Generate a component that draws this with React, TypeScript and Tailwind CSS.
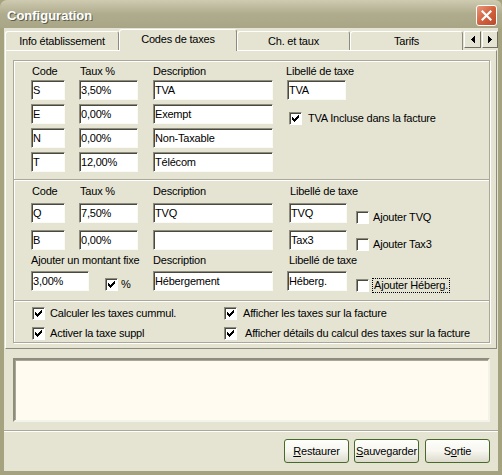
import React from "react";

const CheckMark = () => (
  <svg width="7" height="7" viewBox="0 0 7 7" shapeRendering="crispEdges">
    <path
      d="M0 2h1v3h-1zM1 3h1v3h-1zM2 4h1v3h-1zM3 3h1v3h-1zM4 2h1v3h-1zM5 1h1v3h-1zM6 0h1v3h-1z"
      fill="#000"
    />
  </svg>
);

const Box = ({ checked }: { checked?: boolean }) => (
  <div className="w-[13px] h-[13px] shrink-0 bg-white border border-t-[#8e8c7d] border-l-[#8e8c7d] border-r-white border-b-white shadow-[inset_1px_1px_0_#4a493f] flex items-center justify-center">
    {checked && <CheckMark />}
  </div>
);

const Field = ({ className, value = "" }: { className: string; value?: string }) => (
  <div
    className={`${className} h-[20px] shrink-0 bg-white border border-t-[#8e8c7d] border-l-[#8e8c7d] border-r-[#fbfbf6] border-b-[#fbfbf6] shadow-[inset_1px_1px_0_#4a493f] pl-[1px] flex items-center whitespace-nowrap overflow-hidden`}
  >
    {value}
  </div>
);

const Tab = ({ label, className, selected }: { label: string; className: string; selected?: boolean }) => (
  <div
    className={`${className} shrink-0 flex items-center justify-center rounded-t-[3px] border-l border-t border-white border-r border-r-[#8c8b7e] ${
      selected ? "h-[22px] -mb-[1px] relative z-10 bg-[#e5e4d3] pb-[3px]" : "h-[19px] bg-[#e5e4d3]"
    }`}
  >
    {label}
  </div>
);

const ArrowBtn = ({ dir, className }: { dir: "left" | "right"; className: string }) => (
  <div
    className={`${className} h-[17px] shrink-0 bg-[#e5e4d3] border border-t-white border-l-white border-r-[#716f64] border-b-[#716f64] flex items-center justify-center`}
  >
    <svg width="4" height="7" viewBox="0 0 4 7" shapeRendering="crispEdges">
      {dir === "left" ? <path d="M4 0v7L0 3.5z" fill="#000" /> : <path d="M0 0v7l4-3.5z" fill="#000" />}
    </svg>
  </div>
);

const Btn = ({ children }: { children: React.ReactNode }) => (
  <div className="w-[65px] h-[24px] shrink-0 rounded-[3px] border border-[#47692a] bg-gradient-to-b from-[#fefefb] via-[#f7f6ef] to-[#dddbcc] flex items-center justify-center">
    {children}
  </div>
);

const Sep = () => <div className="h-[2px] border-t border-t-[#aca899] border-b border-b-white" />;

export default function App() {
  return (
    <div className="w-[502px] h-[475px] flex flex-col font-['Liberation_Sans',Arial,sans-serif] text-[11px] leading-[13px] tracking-[-0.2px] text-black bg-[#a5a280]">
      {/* title bar */}
      <div className="h-[28px] shrink-0 rounded-t-[7px] bg-gradient-to-b from-[#cfcbb1] via-[#afab8d] to-[#a9a587] flex items-center justify-between pl-[7px] pr-[5px] pt-[3px]">
        <span className="text-white font-bold text-[13px] leading-[15px] tracking-normal [text-shadow:1px_1px_0_#5f5d49]">
          Configuration
        </span>
        <div className="w-[21px] h-[21px] rounded-[3px] border border-white bg-gradient-to-br from-[#e9967a] via-[#d2623f] to-[#b9492a] flex items-center justify-center">
          <svg width="11" height="11" viewBox="0 0 11 11">
            <path d="M1.5 1.5L9.5 9.5M9.5 1.5L1.5 9.5" stroke="#fff" strokeWidth="2.2" strokeLinecap="square" />
          </svg>
        </div>
      </div>

      {/* body */}
      <div className="flex-1 flex flex-col bg-[#e5e4d3] mx-[4px] mb-[4px]">
        {/* tabs */}
        <div className="h-[22px] shrink-0 flex items-end pl-[1px]">
          <Tab className="w-[114px]" label="Info établissement" />
          <Tab className="w-[118px]" label="Codes de taxes" selected />
          <Tab className="w-[113px]" label="Ch. et taux" />
          <Tab className="w-[113px]" label="Tarifs" />
          <div className="self-start mt-[3px] ml-[1px] flex gap-[1px]">
            <ArrowBtn dir="left" className="w-[17px]" />
            <ArrowBtn dir="right" className="w-[16px]" />
          </div>
        </div>

        {/* tab panel */}
        <div className="ml-[1px] w-[492px] h-[299px] shrink-0 border border-t-white border-l-white border-r-[#8c8b7e] border-b-[#8c8b7e] pt-[9px] pl-[7px]">
          <div className="w-[477px] border border-[#aca899] shadow-[inset_1px_1px_0_#fff,1px_1px_0_#fff]">
            {/* section 1 */}
            <div className="flex pl-[17px] pt-[4px] pb-[7px]">
              <div className="flex flex-col w-[34px]">
                <div className="h-[15px] pl-[1px]">Code</div>
                <div className="flex flex-col gap-[4px]">
                  <Field className="w-[34px]" value="S" />
                  <Field className="w-[34px]" value="E" />
                  <Field className="w-[34px]" value="N" />
                  <Field className="w-[34px]" value="T" />
                </div>
              </div>
              <div className="flex flex-col w-[59px] ml-[14px]">
                <div className="h-[15px] pl-[1px]">Taux %</div>
                <div className="flex flex-col gap-[4px]">
                  <Field className="w-[59px]" value="3,50%" />
                  <Field className="w-[59px]" value="0,00%" />
                  <Field className="w-[59px]" value="0,00%" />
                  <Field className="w-[59px]" value="12,00%" />
                </div>
              </div>
              <div className="flex flex-col w-[120px] ml-[15px]">
                <div className="h-[15px]">Description</div>
                <div className="flex flex-col gap-[4px]">
                  <Field className="w-[120px]" value="TVA" />
                  <Field className="w-[120px]" value="Exempt" />
                  <Field className="w-[120px]" value="Non-Taxable" />
                  <Field className="w-[120px]" value="Télécom" />
                </div>
              </div>
              <div className="flex flex-col ml-[13px]">
                <div className="h-[15px]">Libellé de taxe</div>
                <Field className="w-[59px] ml-[1px]" value="TVA" />
                <div className="flex items-center mt-[12px] ml-[3px]">
                  <Box checked />
                  <span className="ml-[6px]">TVA Incluse dans la facture</span>
                </div>
              </div>
            </div>

            <Sep />

            {/* section 2 */}
            <div className="flex flex-col pl-[17px] pt-[4px] pb-[7px]">
              <div className="flex h-[18px]">
                <div className="w-[34px] pl-[1px]">Code</div>
                <div className="w-[59px] ml-[14px] pl-[1px]">Taux %</div>
                <div className="w-[120px] ml-[15px]">Description</div>
                <div className="ml-[17px]">Libellé de taxe</div>
              </div>
              <div className="flex items-start">
                <Field className="w-[34px]" value="Q" />
                <Field className="w-[59px] ml-[14px]" value="7,50%" />
                <Field className="w-[120px] ml-[15px]" value="TVQ" />
                <Field className="w-[58px] ml-[16px]" value="TVQ" />
                <div className="flex items-center ml-[9px] mt-[8px]">
                  <Box />
                  <span className="ml-[4px]">Ajouter TVQ</span>
                </div>
              </div>
              <div className="flex items-start mt-[6px]">
                <Field className="w-[34px]" value="B" />
                <Field className="w-[59px] ml-[14px]" value="0,00%" />
                <Field className="w-[120px] ml-[15px]" />
                <Field className="w-[58px] ml-[16px]" value="Tax3" />
                <div className="flex items-center ml-[9px] mt-[8px]">
                  <Box />
                  <span className="ml-[4px]">Ajouter Tax3</span>
                </div>
              </div>
              <div className="flex h-[20px] pt-[3px]">
                <div className="w-[122px]">Ajouter un montant fixe</div>
                <div className="w-[120px]">Description</div>
                <div className="ml-[16px]">Libellé de taxe</div>
              </div>
              <div className="flex items-start">
                <div className="w-[122px] flex items-start">
                  <Field className="w-[58px]" value="3,00%" />
                  <div className="flex items-center ml-[16px] mt-[7px]">
                    <Box checked />
                    <span className="ml-[3px]">%</span>
                  </div>
                </div>
                <Field className="w-[120px]" value="Hébergement" />
                <Field className="w-[60px] ml-[14px]" value="Héberg." />
                <div className="flex items-center ml-[9px] mt-[7px]">
                  <Box />
                  <span className="ml-[3px] px-[1px] border border-dotted border-black leading-[13px]">
                    Ajouter Héberg.
                  </span>
                </div>
              </div>
            </div>

            <Sep />

            {/* section 3 */}
            <div className="flex flex-col pl-[18px] pt-[2px] gap-[2px]">
              <div className="flex items-center h-[18px]">
                <div className="w-[192px] flex items-center">
                  <Box checked />
                  <span className="ml-[5px]">Calculer les taxes cummul.</span>
                </div>
                <Box checked />
                <span className="ml-[6px]">Afficher les taxes sur la facture</span>
              </div>
              <div className="flex items-center h-[18px]">
                <div className="w-[192px] flex items-center">
                  <Box checked />
                  <span className="ml-[5px]">Activer la taxe suppl</span>
                </div>
                <Box checked />
                <span className="ml-[8px]">Afficher détails du calcul des taxes sur la facture</span>
              </div>
            </div>
          </div>
        </div>

        {/* memo */}
        <div className="ml-[9px] mt-[9px] w-[477px] h-[64px] shrink-0 bg-[#fffbf0] border-2 border-t-[#8e8c7d] border-l-[#8e8c7d] border-r-[#f4f3ea] border-b-[#f4f3ea] shadow-[inset_1px_1px_0_#a9a797]" />

        <div className="mt-[8px]">
          <Sep />
        </div>

        {/* buttons */}
        <div className="mt-[7px] flex justify-end pr-[8px]">
          <Btn>
            <span>
              <u>R</u>estaurer
            </span>
          </Btn>
          <div className="ml-[5px]">
            <Btn>
              <span>
                <u>S</u>auvegarder
              </span>
            </Btn>
          </div>
          <div className="ml-[6px]">
            <Btn>
              <span>
                S<u>o</u>rtie
              </span>
            </Btn>
          </div>
        </div>
      </div>
    </div>
  );
}
